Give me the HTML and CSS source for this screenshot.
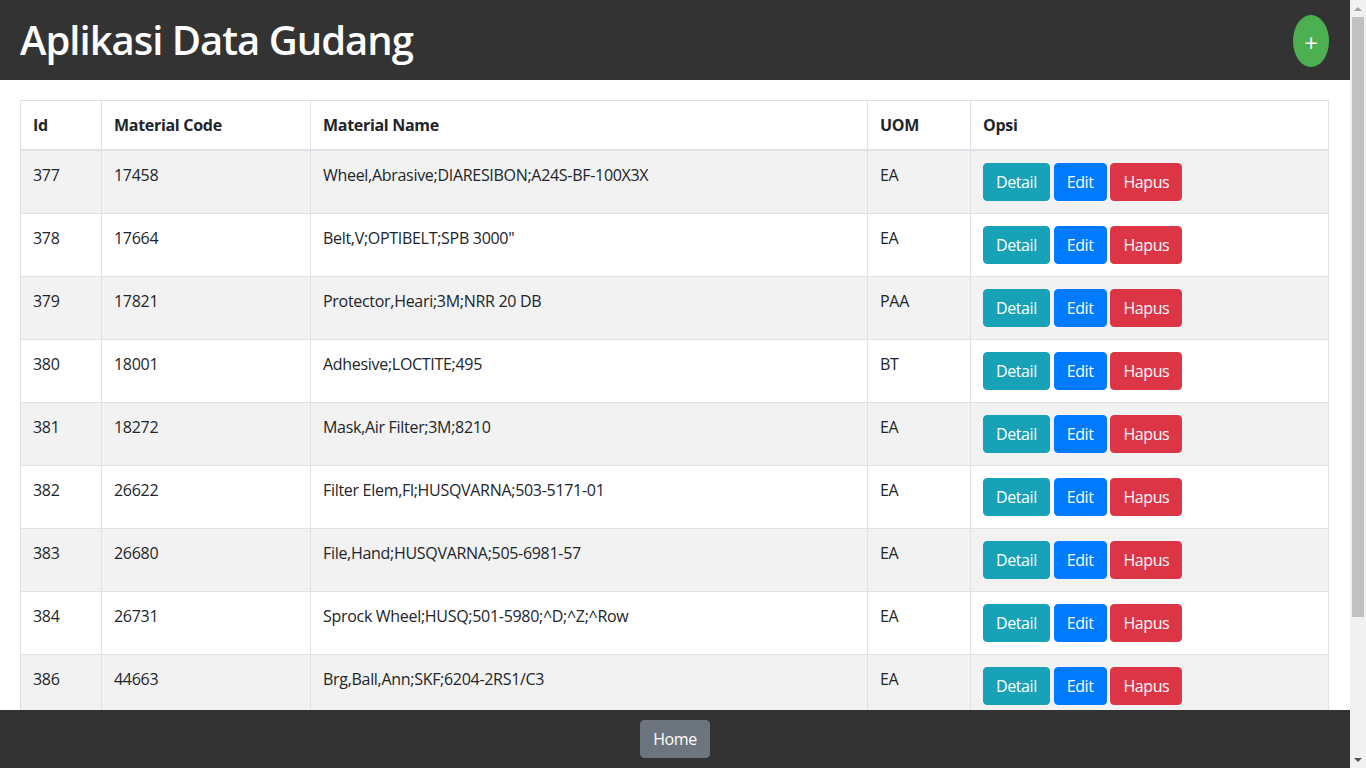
FILE: index.html
```html
<!DOCTYPE html>
<html lang="id">
<head>
<meta charset="utf-8">
<title>Aplikasi Data Gudang</title>
<link rel="stylesheet" href="styles.css">
</head>
<body>
<header class="topbar">
  <h1 class="title">Aplikasi Data Gudang</h1>
  <button class="btn-add" type="button">+</button>
</header>
<main class="content">
  <table class="data-table">
    <thead>
      <tr>
        <th class="col-id">Id</th>
        <th class="col-code">Material Code</th>
        <th class="col-name">Material Name</th>
        <th class="col-uom">UOM</th>
        <th class="col-opt">Opsi</th>
      </tr>
    </thead>
    <tbody>
      <tr><td>377</td><td>17458</td><td>Wheel,Abrasive;DIARESIBON;A24S-BF-100X3X</td><td>EA</td><td><button class="btn btn-info">Detail</button> <button class="btn btn-primary">Edit</button> <button class="btn btn-danger">Hapus</button></td></tr>
      <tr><td>378</td><td>17664</td><td>Belt,V;OPTIBELT;SPB 3000"</td><td>EA</td><td><button class="btn btn-info">Detail</button> <button class="btn btn-primary">Edit</button> <button class="btn btn-danger">Hapus</button></td></tr>
      <tr><td>379</td><td>17821</td><td>Protector,Heari;3M;NRR 20 DB</td><td>PAA</td><td><button class="btn btn-info">Detail</button> <button class="btn btn-primary">Edit</button> <button class="btn btn-danger">Hapus</button></td></tr>
      <tr><td>380</td><td>18001</td><td>Adhesive;LOCTITE;495</td><td>BT</td><td><button class="btn btn-info">Detail</button> <button class="btn btn-primary">Edit</button> <button class="btn btn-danger">Hapus</button></td></tr>
      <tr><td>381</td><td>18272</td><td>Mask,Air Filter;3M;8210</td><td>EA</td><td><button class="btn btn-info">Detail</button> <button class="btn btn-primary">Edit</button> <button class="btn btn-danger">Hapus</button></td></tr>
      <tr><td>382</td><td>26622</td><td>Filter Elem,Fl;HUSQVARNA;503-5171-01</td><td>EA</td><td><button class="btn btn-info">Detail</button> <button class="btn btn-primary">Edit</button> <button class="btn btn-danger">Hapus</button></td></tr>
      <tr><td>383</td><td>26680</td><td>File,Hand;HUSQVARNA;505-6981-57</td><td>EA</td><td><button class="btn btn-info">Detail</button> <button class="btn btn-primary">Edit</button> <button class="btn btn-danger">Hapus</button></td></tr>
      <tr><td>384</td><td>26731</td><td>Sprock Wheel;HUSQ;501-5980;^D;^Z;^Row</td><td>EA</td><td><button class="btn btn-info">Detail</button> <button class="btn btn-primary">Edit</button> <button class="btn btn-danger">Hapus</button></td></tr>
      <tr><td>386</td><td>44663</td><td>Brg,Ball,Ann;SKF;6204-2RS1/C3</td><td>EA</td><td><button class="btn btn-info">Detail</button> <button class="btn btn-primary">Edit</button> <button class="btn btn-danger">Hapus</button></td></tr>
    </tbody>
  </table>
</main>
<footer class="bottombar">
  <a class="btn btn-secondary" href="#">Home</a>
</footer>
<div class="fake-scrollbar" aria-hidden="true">
  <span class="sb-arrow sb-up"></span>
  <span class="sb-track"><span class="sb-thumb"></span></span>
  <span class="sb-arrow sb-down"></span>
</div>
</body>
</html>
```

FILE: styles.css
```css
* { box-sizing: border-box; }

html, body {
  margin: 0;
  padding: 0;
}

body {
  font-family: "Open Sans", "Noto Sans", "Liberation Sans", sans-serif;
  font-size: 16px;
  line-height: 1.5;
  color: #212529;
  background: #fff;
  padding-right: 16px;
}

.topbar {
  height: 80px;
  background: #333333;
  display: flex;
  align-items: center;
  justify-content: space-between;
  padding: 0 21px 0 20px;
}

.title {
  margin: 0;
  color: #fff;
  font-size: 40px;
  font-weight: 600;
  line-height: 1.2;
  letter-spacing: -1px;
}

.btn-add {
  width: 36px;
  height: 52px;
  border: none;
  border-radius: 50%;
  background: #4caf50;
  color: #fff;
  font-family: inherit;
  font-size: 24px;
  font-weight: 400;
  line-height: 1;
  padding: 4px 0 0 0;
  margin-top: 2px;
}

.content {
  padding: 20px 21px 20px 20px;
}

.data-table {
  width: 100%;
  border-collapse: collapse;
  border: 1px solid #dee2e6;
  letter-spacing: -0.3px;
}

.data-table th,
.data-table td {
  border: 1px solid #dee2e6;
  padding: 12px;
  text-align: left;
  vertical-align: top;
}

.data-table th {
  font-weight: 700;
  border-bottom: 2px solid #dee2e6;
}

.data-table tbody tr:nth-child(odd) {
  background: #f2f2f2;
}

.col-id { width: 81px; }
.col-code { width: 209px; }
.col-name { width: 557px; }
.col-uom { width: 103px; }

.btn {
  display: inline-block;
  font-family: inherit;
  font-size: 16px;
  line-height: 24px;
  letter-spacing: -0.4px;
  padding: 6px 12px;
  border: 1px solid transparent;
  border-radius: 4px;
  color: #fff;
  text-decoration: none;
  cursor: pointer;
}

.btn-info { background: #17a2b8; border-color: #17a2b8; }
.btn-primary { background: #007bff; border-color: #007bff; }
.btn-danger { background: #dc3545; border-color: #dc3545; }
.btn-secondary { background: #6c757d; border-color: #6c757d; }

.bottombar {
  position: fixed;
  left: 0;
  right: 16px;
  bottom: 0;
  height: 58px;
  background: #333333;
  display: flex;
  justify-content: center;
  align-items: center;
}

.fake-scrollbar {
  position: fixed;
  top: 0;
  right: 0;
  bottom: 0;
  width: 16px;
  background: #f1f1f1;
  display: flex;
  flex-direction: column;
}

.sb-arrow {
  height: 17px;
  display: flex;
  align-items: center;
  justify-content: center;
}

.sb-up::before {
  content: "";
  border-left: 4px solid transparent;
  border-right: 4px solid transparent;
  border-bottom: 4px solid #a3a3a3;
}

.sb-down::before {
  content: "";
  border-left: 4px solid transparent;
  border-right: 4px solid transparent;
  border-top: 4px solid #505050;
}

.sb-track {
  flex: 1;
  display: flex;
  flex-direction: column;
  padding: 0 2px;
}

.sb-thumb {
  height: 600px;
  background: #c1c1c1;
}
```
